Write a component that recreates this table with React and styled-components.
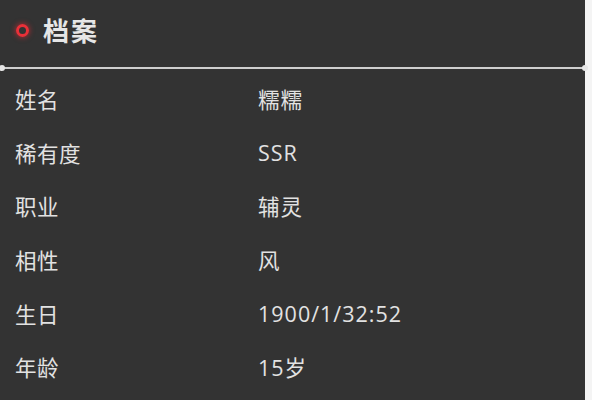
import styled, { createGlobalStyle } from "styled-components";

const GlobalStyle = createGlobalStyle`
  html, body {
    margin: 0;
    padding: 0;
    background: #f4f4f4;
  }
`;

const Page = styled.div`
  width: 592px;
  height: 400px;
  overflow: hidden;
  background: #f4f4f4;
`;

const Panel = styled.section`
  width: 585px;
  height: 400px;
  background: #333333;
  font-family: "Open Sans", "Noto Sans CJK SC", sans-serif;
  color: #e2e2e2;
`;

const Header = styled.div`
  height: 60px;
  display: flex;
  align-items: center;
  gap: 14px;
  padding: 0 0 0 16px;
  box-sizing: border-box;
`;

const Dot = styled.span`
  width: 7px;
  height: 7px;
  border-radius: 50%;
  border: 3px solid #ea3038;
  box-shadow: 0 0 5px 1px rgba(232, 40, 50, 0.55);
`;

const Title = styled.h2`
  margin: 0;
  font-size: 26px;
  font-weight: 700;
  color: #e6e6e6;
  letter-spacing: 2px;
`;

const Divider = styled.div`
  position: relative;
  height: 2px;
  margin-top: 7px;
  background: #cfcfcf;

  &::before,
  &::after {
    content: "";
    position: absolute;
    top: -2px;
    width: 6px;
    height: 6px;
    border-radius: 50%;
    background: #e6e6e6;
  }
  &::before {
    left: -1px;
  }
  &::after {
    right: -3px;
  }
`;

const List = styled.dl`
  margin: 0;
  padding: 3px 0 0 15px;
`;

const Row = styled.div`
  display: grid;
  grid-template-columns: 243px 1fr;
  height: 53.6px;
  align-items: center;
  font-size: 21.5px;
`;

const Label = styled.dt`
  margin: 0;
  letter-spacing: 0.5px;
`;

const Value = styled.dd`
  margin: 0;
  letter-spacing: 1px;
`;

const rows = [
  ["姓名", "糯糯"],
  ["稀有度", "SSR"],
  ["职业", "辅灵"],
  ["相性", "风"],
  ["生日", "1900/1/32:52"],
  ["年龄", "15岁"],
];

export default function App() {
  return (
    <Page>
      <GlobalStyle />
      <Panel>
        <Header>
          <Dot />
          <Title>档案</Title>
        </Header>
        <Divider />
        <List>
          {rows.map(([k, v]) => (
            <Row key={k}>
              <Label>{k}</Label>
              <Value>{v}</Value>
            </Row>
          ))}
        </List>
      </Panel>
    </Page>
  );
}
